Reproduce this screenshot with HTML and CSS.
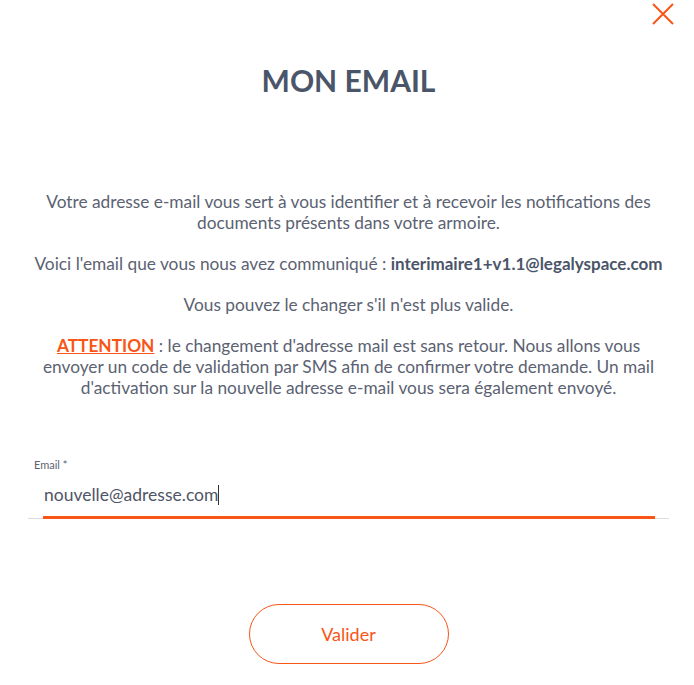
FILE: index.html
```html
<!DOCTYPE html>
<html lang="fr">
<head>
    <meta charset="UTF-8">
    <meta name="viewport" content="width=device-width, initial-scale=1.0">
    <title>Mon email</title>
    <link rel="stylesheet" href="styles.css">
</head>
<body>
    <div class="modal">
        <button class="close-btn" aria-label="Fermer">
            <svg width="24" height="22" viewBox="0 0 24 22">
                <path d="M2 1 L22 21 M22 1 L2 21" stroke="#f95516" stroke-width="2" fill="none"/>
            </svg>
        </button>
        <h1 class="title">MON EMAIL</h1>

        <div class="text">
            <p>Votre adresse e-mail vous sert à vous identifier et à recevoir les notifications des documents présents dans votre armoire.</p>
            <p>Voici l'email que vous nous avez communiqué : <strong>interimaire1+v1.1@legalyspace.com</strong></p>
            <p>Vous pouvez le changer s'il n'est plus valide.</p>
            <p><span class="attention">ATTENTION</span> : le changement d'adresse mail est sans retour. Nous allons vous envoyer un code de validation par SMS afin de confirmer votre demande. Un mail d'activation sur la nouvelle adresse e-mail vous sera également envoyé.</p>
        </div>

        <div class="field">
            <label for="email">Email *</label>
            <div class="input-wrap">
                <span class="value">nouvelle@adresse.com</span><span class="cursor"></span>
            </div>
        </div>

        <div class="actions">
            <button class="submit-btn">Valider</button>
        </div>
    </div>
</body>
</html>
```

FILE: styles.css
```css
body {
    font-family: Lato, "Open Sans", sans-serif;
    background-color: #fff;
    margin: 0;
    color: #5b6272;
}
.modal {
    position: relative;
    width: 694px;
    height: 685px;
    box-sizing: border-box;
    padding: 0 25px 0 28px;
}
.close-btn {
    position: absolute;
    top: 3px;
    right: 19px;
    background: none;
    border: none;
    padding: 0;
    cursor: pointer;
}
.title {
    margin: 0;
    padding-top: 60px;
    text-align: center;
    font-size: 30px;
    font-weight: 700;
    color: #4b5569;
    line-height: 40px;
}
.text {
    margin-top: 91px;
    text-align: center;
    font-size: 17.3px;
    line-height: 21px;
}
.text p {
    margin: 0 0 20px 0;
}
.text strong {
    color: #4b5569;
    font-size: 17px;
}
.attention {
    color: #f95516;
    font-weight: 700;
    text-decoration: underline;
}
.field {
    margin-top: 60px;
    border-bottom: 1px solid #dcdcdc;
}
.field label {
    display: block;
    font-size: 11px;
    color: #5b6272;
    padding-left: 6px;
    line-height: 14px;
}
.input-wrap {
    margin: 0 14px -1px 15px;
    padding: 12px 1px 10px 1px;
    border-bottom: 3px solid #f95516;
    font-size: 17.5px;
    color: #4f5566;
    line-height: 22px;
    display: flex;
    align-items: center;
}
.cursor {
    display: inline-block;
    width: 1px;
    height: 20px;
    background: #333;
}
.actions {
    display: flex;
    justify-content: center;
    margin-top: 85px;
}
.submit-btn {
    width: 200px;
    height: 60px;
    border: 1px solid #f95516;
    border-radius: 30px;
    background: #fff;
    color: #f95516;
    font-family: Lato, sans-serif;
    font-size: 18px;
    cursor: pointer;
}
```
